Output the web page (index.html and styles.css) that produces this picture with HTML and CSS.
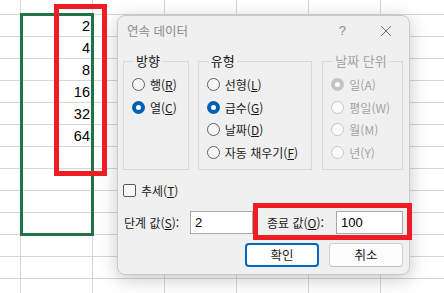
FILE: index.html
```html
<!DOCTYPE html>
<html lang="ko">
<head>
<meta charset="utf-8">
<link rel="stylesheet" href="styles.css">
</head>
<body>
<div class="sheet">
  <div class="col">
    <div class="cell">2</div>
    <div class="cell">4</div>
    <div class="cell">8</div>
    <div class="cell">16</div>
    <div class="cell">32</div>
    <div class="cell">64</div>
  </div>
</div>
<div class="selection"></div>
<div class="mark mark-col"></div>

<div class="dialog">
  <div class="titlebar">
    <span class="title">연속 데이터</span>
    <span class="help">?</span>
    <svg class="close" width="12" height="12" viewBox="0 0 12 12"><path d="M1 1 L11 11 M11 1 L1 11" stroke="#6f6f6f" stroke-width="1" fill="none"/></svg>
  </div>
  <div class="groups">
    <fieldset class="group g1">
      <legend>방향</legend>
      <div class="opt"><span class="radio"></span>행(<u>R</u>)</div>
      <div class="opt"><span class="radio on"></span>열(<u>C</u>)</div>
    </fieldset>
    <fieldset class="group g2">
      <legend>유형</legend>
      <div class="opt"><span class="radio"></span>선형(<u>L</u>)</div>
      <div class="opt"><span class="radio on"></span>급수(<u>G</u>)</div>
      <div class="opt"><span class="radio"></span>날짜(<u>D</u>)</div>
      <div class="opt"><span class="radio"></span>자동 채우기(<u>F</u>)</div>
    </fieldset>
    <fieldset class="group g3 disabled">
      <legend>날짜 단위</legend>
      <div class="opt"><span class="radio on"></span>일(A)</div>
      <div class="opt"><span class="radio"></span>평일(W)</div>
      <div class="opt"><span class="radio"></span>월(M)</div>
      <div class="opt"><span class="radio"></span>년(Y)</div>
    </fieldset>
  </div>
  <div class="check-row"><span class="checkbox"></span>추세(<u>T</u>)</div>
  <div class="input-row">
    <span class="lbl lbl1">단계 값(<u>S</u>):</span>
    <span class="input in1">2</span>
    <span class="lbl lbl2">종료 값(<u>O</u>):</span>
    <span class="input in2">100</span>
  </div>
  <div class="buttons">
    <span class="btn primary">확인</span>
    <span class="btn">취소</span>
  </div>
</div>
<div class="mark mark-end"></div>
</body>
</html>
```

FILE: styles.css
```css
html, body {
  margin: 0;
  padding: 0;
}
body {
  width: 444px;
  height: 293px;
  overflow: hidden;
  position: relative;
  background-color: #ffffff;
  background-image:
    linear-gradient(to right, #d6d6d6 1px, transparent 1px),
    linear-gradient(to bottom, #d6d6d6 1px, transparent 1px);
  background-size: 72px 22px;
  background-position: 20px 14px;
  font-family: "Noto Sans CJK KR", "Liberation Sans", sans-serif;
  font-size: 12px;
  color: #1a1a1a;
}
.sheet {
  padding-top: 14px;
  padding-left: 20px;
}
.col {
  width: 70px;
}
.cell {
  height: 22px;
  box-sizing: border-box;
  padding-top: 2px;
  line-height: 20px;
  text-align: right;
  font-family: "Liberation Sans", Arial, sans-serif;
  font-size: 14.5px;
  color: #000;
}
.selection {
  position: absolute;
  left: 20px;
  top: 13px;
  width: 74px;
  height: 223px;
  box-sizing: border-box;
  border: 3px solid #217346;
}
.mark {
  position: absolute;
  box-sizing: border-box;
  border: 5px solid #ee1c25;
  z-index: 5;
}
.mark-col {
  left: 54px;
  top: 4px;
  width: 53px;
  height: 172px;
}
.mark-end {
  left: 253px;
  top: 203px;
  width: 159px;
  height: 37px;
}
.dialog {
  position: absolute;
  left: 117px;
  top: 15px;
  width: 293px;
  height: 260px;
  box-sizing: border-box;
  border: 1px solid #c9c9c9;
  border-radius: 8px;
  background: #f0f0f0;
  box-shadow: 0 4px 18px rgba(0, 0, 0, 0.22);
  padding: 0 6px 0 5px;
  display: flex;
  flex-direction: column;
  z-index: 2;
}
.titlebar {
  height: 29px;
  display: flex;
  align-items: center;
  padding-left: 4px;
}
.title {
  color: #8c8c8c;
  font-size: 12.5px;
  flex: 1;
}
.help {
  color: #8c8c8c;
  font-family: "Liberation Sans", sans-serif;
  font-size: 13px;
  margin-right: 34px;
}
.close {
  margin-right: 11px;
}
.groups {
  display: flex;
  margin-top: 8px;
}
.group {
  margin: 0;
  padding: 4px 0 5px 8px;
  border: 1px solid #d9d9d9;
  box-sizing: border-box;
  min-width: 0;
}
.group legend {
  padding: 0 2px;
  margin-left: 2px;
  line-height: 16px;
  font-size: 13px;
}
.g1 { width: 66px; }
.g2 { width: 115px; margin-left: 9px; }
.g3 { width: 81px; margin-left: 10px; color: #a3a3a3; }
.opt {
  height: 22.7px;
  display: flex;
  align-items: center;
  white-space: nowrap;
}
.radio {
  width: 13px;
  height: 13px;
  box-sizing: border-box;
  border: 1px solid #5f5f5f;
  border-radius: 50%;
  background: #f7f7f7;
  margin-right: 5px;
  flex: none;
}
.radio.on {
  border: 4px solid #005fb8;
  background: #ffffff;
}
.disabled .radio {
  border-color: #c6c6c6;
  background: #fbfbfb;
}
.disabled .radio.on {
  border: 4px solid #c4c4c4;
  background: #ffffff;
}
.check-row {
  margin-top: 11px;
  height: 20px;
  display: flex;
  align-items: center;
}
.checkbox {
  width: 13px;
  height: 13px;
  box-sizing: border-box;
  border: 1px solid #5a5a5a;
  border-radius: 2px;
  background: #f9f9f9;
  margin-right: 5px;
}
.input-row {
  margin-top: 10px;
  height: 23px;
  display: flex;
  align-items: center;
}
.lbl {
  white-space: nowrap;
}
.lbl1 {
  width: 66px;
  margin-left: 1px;
}
.lbl2 {
  width: 69px;
  margin-left: 14px;
}
.input {
  height: 23px;
  box-sizing: border-box;
  border: 1px solid #a9a9a9;
  background: #ffffff;
  padding-left: 4px;
  line-height: 21px;
  font-family: "Liberation Sans", sans-serif;
  font-size: 13px;
  color: #000;
}
.in1 { width: 63px; }
.in2 { width: 67px; }
.buttons {
  margin-top: 9px;
  display: flex;
  justify-content: flex-end;
  gap: 10px;
}
.btn {
  width: 74px;
  height: 24px;
  box-sizing: border-box;
  border: 1px solid #d0d0d0;
  border-bottom-color: #bcbcbc;
  border-radius: 4px;
  background: #fdfdfd;
  display: flex;
  align-items: center;
  justify-content: center;
  font-size: 12.5px;
  color: #1a1a1a;
}
.btn.primary {
  border: 2px solid #0067c0;
  background: #ffffff;
}
u {
  text-underline-offset: 1px;
}
```
